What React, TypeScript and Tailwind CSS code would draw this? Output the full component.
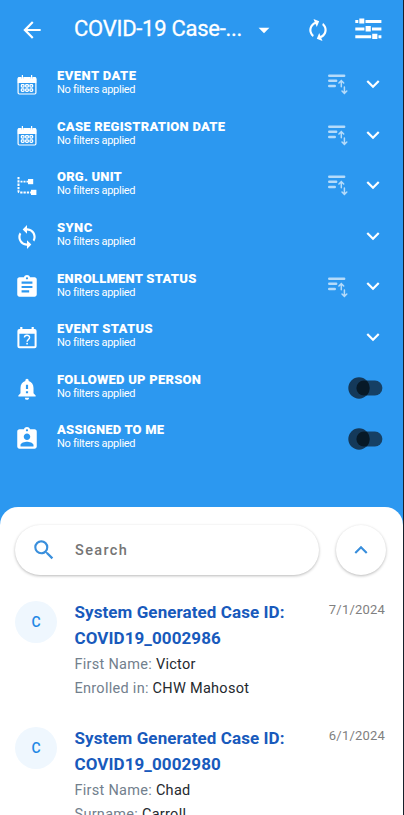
import type { ReactNode } from "react";
import {
  MdArrowBack,
  MdArrowDropDown,
  MdAssignment,
  MdAssignmentInd,
  MdAutorenew,
  MdExpandLess,
  MdExpandMore,
  MdNotificationImportant,
  MdSearch,
  MdSync,
} from "react-icons/md";

function CalendarIcon() {
  return (
    <svg width="20" height="20" viewBox="0 0 20 20" fill="none">
      <path d="M5.4 0v4M14.6 0v4" stroke="white" strokeWidth="1.2" />
      <path d="M2 2h2.3v1.5h2.2V2h7v1.5h2.2V2H18a1.3 1.3 0 0 1 1.3 1.3V8H.7V3.3A1.3 1.3 0 0 1 2 2z" fill="white" />
      <rect x="1.1" y="3" width="17.8" height="16" rx="1.2" stroke="white" strokeWidth="1.2" />
      {[10.9, 15.1].map((y) =>
        [5.7, 10, 14.3].map((x) => (
          <rect key={`${x}-${y}`} x={x - 1.35} y={y - 1.25} width="2.7" height="2.5" rx="0.8" stroke="white" strokeWidth="1.3" />
        )),
      )}
    </svg>
  );
}

function OrgUnitIcon() {
  return (
    <svg width="20" height="20" viewBox="0 0 20 20" fill="none">
      <path d="M1.5 1v14.3q0 1.2 1.2 1.2H14" stroke="white" strokeWidth="2" strokeDasharray="2.3 1" />
      <path d="M3.5 5.7H11" stroke="white" strokeWidth="1.8" strokeDasharray="2 1" />
      <rect x="11" y="3" width="5.2" height="5.2" fill="white" />
      <rect x="14" y="13.8" width="5.4" height="5.2" fill="white" />
    </svg>
  );
}

function EventStatusIcon() {
  return (
    <svg width="20" height="22" viewBox="0 0 20 22" fill="none">
      <path
        fillRule="evenodd"
        clipRule="evenodd"
        d="M3.2 0h2.2v2.1h9.2V0h2.2v2.1h.8a2 2 0 0 1 2 2v15.1a2 2 0 0 1-2 2H2.4a2 2 0 0 1-2-2V4.1a2 2 0 0 1 2-2h.8V0zM2.4 6.8v12.4h15.2V6.8H2.4z"
        fill="white"
      />
      <path d="M7.4 10.6c.1-3.2 5.3-3 5.2 0 0 1.8-2.5 2-2.5 4.1" stroke="white" strokeWidth="1.4" />
      <rect x="9.3" y="15.9" width="1.6" height="1.6" fill="white" />
    </svg>
  );
}

function SortIcon() {
  return (
    <svg width="20" height="21" viewBox="0 0 20 21" fill="none" stroke="white" strokeOpacity="0.65" strokeLinecap="round">
      <path d="M1.2 1.7h15M1.2 6.8h7M1.2 12h5.6" strokeWidth="2.4" />
      <path d="M13.3 12.8V6.6M10.9 9l2.4-2.4L15.7 9M16.4 13v6.2M14 17l2.4 2.4 2.4-2.4" strokeWidth="1.5" />
    </svg>
  );
}

function TuneIcon() {
  return (
    <svg width="27" height="22" viewBox="0 0 27 22" fill="white">
      <path d="M.3 2h3v3h-3zM4.3.5h5v5h-5zM10.5 2h15.9v3H10.5z" />
      <path d="M.3 9.5h9.1v3H.3zM10.6 8h5.2v5.5h-5.2zM17 9.5h9.4v3H17z" />
      <path d="M.3 17.2h15.9v3H.3zM17.2 15.8h5.2v5.2h-5.2zM23.5 17.2h2.9v3h-2.9z" />
    </svg>
  );
}

function Toggle() {
  return (
    <svg width="36" height="22" viewBox="0 0 36 22">
      <rect x="8.4" y="3.5" width="26" height="15" rx="7.5" fill="#164064" />
      <circle cx="11" cy="11" r="10.7" fill="#14395a" />
      <path d="M19.1 4A10.7 10.7 0 0 1 19.1 18L15.9 18.5a7.5 7.5 0 0 1 0-15z" fill="#071927" />
    </svg>
  );
}

type Filter = {
  title: string;
  tracking: string;
  icon: ReactNode;
  sortable?: boolean;
  toggle?: boolean;
};

const filters: Filter[] = [
  { title: "EVENT DATE", tracking: "tracking-[0.45px]", icon: <CalendarIcon />, sortable: true },
  { title: "CASE REGISTRATION DATE", tracking: "tracking-[0.25px]", icon: <CalendarIcon />, sortable: true },
  { title: "ORG. UNIT", tracking: "tracking-[0.2px]", icon: <OrgUnitIcon />, sortable: true },
  { title: "SYNC", tracking: "tracking-[0.4px]", icon: <MdSync size={26} /> },
  { title: "ENROLLMENT STATUS", tracking: "tracking-[0.25px]", icon: <MdAssignment size={26} />, sortable: true },
  { title: "EVENT STATUS", tracking: "tracking-[0.36px]", icon: <EventStatusIcon /> },
  { title: "FOLLOWED UP PERSON", tracking: "tracking-[0.24px]", icon: <MdNotificationImportant size={26} />, toggle: true },
  { title: "ASSIGNED TO ME", tracking: "tracking-[0.2px]", icon: <MdAssignmentInd size={26} />, toggle: true },
];

function FilterRow({ filter }: { filter: Filter }) {
  return (
    <div className="flex h-[50.6px] items-center text-white">
      <div className="ml-[13.5px] flex w-[27px] shrink-0 justify-center pt-[2.5px]">{filter.icon}</div>
      <div className="ml-[16.5px] flex-1 pb-[2px]">
        <div className={`h-[15px] text-[13px] leading-[15px] font-black whitespace-nowrap ${filter.tracking}`}>{filter.title}</div>
        <div className="h-[14px] text-[11px] leading-[14px] tracking-[-0.28px]">No filters applied</div>
      </div>
      {filter.sortable && (
        <div className="mr-[12px] pt-[2px]">
          <SortIcon />
        </div>
      )}
      {filter.toggle ? (
        <div className="mr-[19px] pt-[1.5px]">
          <Toggle />
        </div>
      ) : (
        <div className="mr-[17px] pt-[0.5px]">
          <MdExpandMore size={26} />
        </div>
      )}
    </div>
  );
}

type Case = { id: string; date: string; fields: [string, string][] };

const cases: Case[] = [
  { id: "COVID19_0002986", date: "7/1/2024", fields: [["First Name:", "Victor"], ["Enrolled in:", "CHW Mahosot"]] },
  { id: "COVID19_0002980", date: "6/1/2024", fields: [["First Name:", "Chad"], ["Surname:", "Carroll"]] },
];

function CaseCard({ item }: { item: Case }) {
  return (
    <div className="flex h-[126.3px] shrink-0 items-start">
      <div className="mt-[0.5px] ml-[15px] flex size-[42px] shrink-0 items-center justify-center rounded-full bg-[#eff7fe] pt-[1px] text-[14px] font-medium text-[#1e88e5]">
        C
      </div>
      <div className="ml-[17.5px] flex-1 whitespace-nowrap">
        <div className="text-[17px] leading-[25.5px] font-bold tracking-[0.08px] text-[#185abc]">
          <div>System Generated Case ID:</div>
          <div>{item.id}</div>
        </div>
        <div className="pt-[1.5px]">
          {item.fields.map(([label, value]) => (
            <div key={label} className="text-[14.5px] leading-[24.3px] tracking-[0.28px] text-[#24292e]">
              <span className="text-[#72808d]">{label}</span> {value}
            </div>
          ))}
        </div>
      </div>
      <div className="mt-[1px] mr-[18px] text-[13px] leading-[18px] tracking-[0.2px] text-[#808080]">{item.date}</div>
    </div>
  );
}

export default function App() {
  return (
    <div className="flex h-[815px] w-[404px] flex-col overflow-hidden border-r border-[#17202a] bg-[#2c98f0] font-['Roboto',sans-serif]">
      <header className="flex h-[58px] shrink-0 items-center text-white">
        <MdArrowBack size={26} className="mt-[1px] ml-[19px] shrink-0" />
        <h1 className="ml-[29px] w-[177px] text-[22px] leading-[28px] tracking-[-0.27px] whitespace-nowrap [-webkit-text-stroke:0.3px_white]">
          COVID-19 Case-...
        </h1>
        <MdArrowDropDown size={26} className="mt-[1px] shrink-0" />
        <MdAutorenew size={26} className="mt-[1px] ml-[28px] shrink-0 -rotate-[22deg]" />
        <div className="ml-[24px] shrink-0">
          <TuneIcon />
        </div>
      </header>
      <section className="h-[449px] shrink-0 pt-[0.5px]">
        {filters.map((filter) => (
          <FilterRow key={filter.title} filter={filter} />
        ))}
      </section>
      <main className="flex flex-1 flex-col overflow-hidden rounded-t-[18px] bg-white">
        <div className="flex shrink-0 items-center pt-[17.5px]">
          <div className="ml-[15px] flex h-[50px] w-[304px] items-center rounded-full bg-white shadow-[0_1px_3px_rgba(0,0,0,0.28)]">
            <MdSearch size={26} className="ml-[16px] text-[#3a8fdc]" />
            <span className="ml-[18px] pt-[2px] text-[14.5px] font-medium tracking-[1.35px] text-[#757575]">Search</span>
          </div>
          <div className="ml-[17px] flex size-[50px] items-center justify-center rounded-full bg-white shadow-[0_1px_3px_rgba(0,0,0,0.28)]">
            <MdExpandLess size={26} className="text-[#3a8fdc]" />
          </div>
        </div>
        <div className="mt-[25.5px] flex flex-col">
          {cases.map((item) => (
            <CaseCard key={item.id} item={item} />
          ))}
        </div>
      </main>
    </div>
  );
}
